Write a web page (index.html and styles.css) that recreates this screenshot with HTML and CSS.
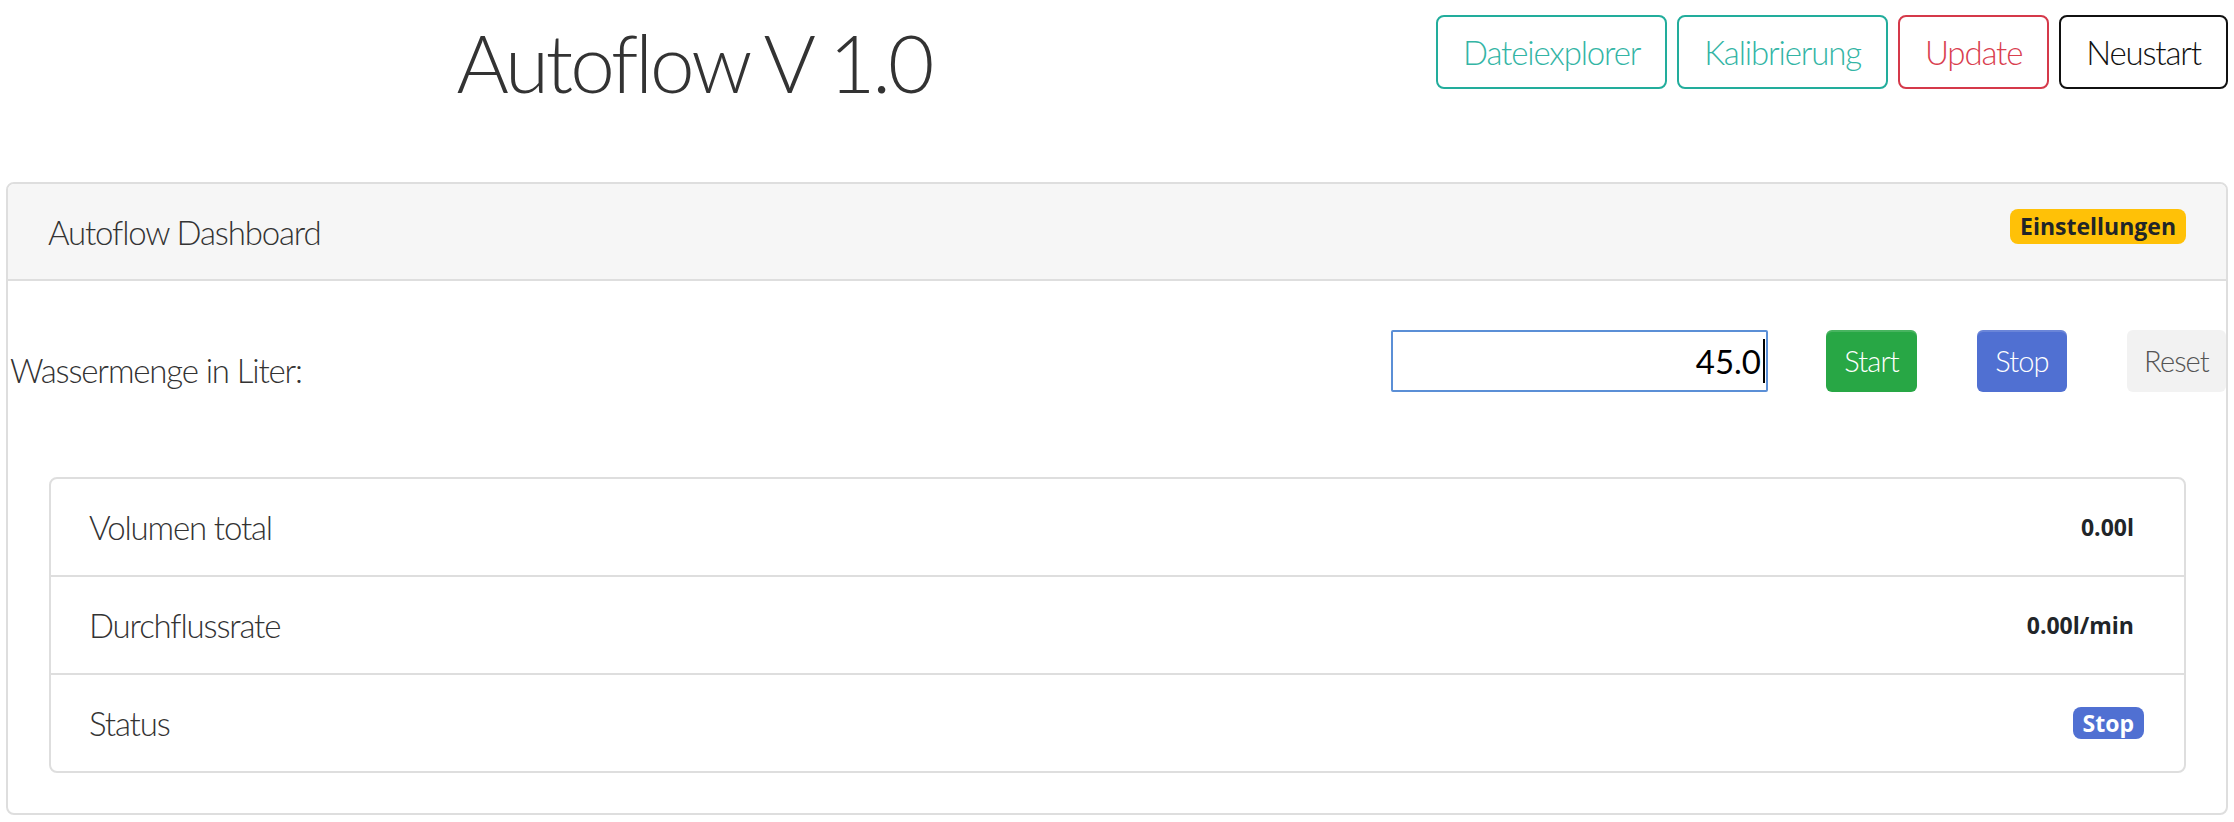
FILE: index.html
```html
<!DOCTYPE html>
<html lang="de">
<head>
<meta charset="utf-8">
<title>Autoflow V 1.0</title>
<link rel="stylesheet" href="styles.css">
</head>
<body>
<div class="page">
  <header class="topbar">
    <div class="title-col"><h1 class="title">Autoflow V 1.0</h1></div>
    <nav class="actions">
      <button class="btn btn-teal">Dateiexplorer</button>
      <button class="btn btn-teal">Kalibrierung</button>
      <button class="btn btn-red">Update</button>
      <button class="btn btn-dark">Neustart</button>
    </nav>
  </header>

  <section class="card">
    <div class="card-header">
      <span class="card-title">Autoflow Dashboard</span>
      <span class="badge badge-warning">Einstellungen</span>
    </div>
    <div class="card-body">
      <div class="control-row">
        <label class="amount-label" for="amount">Wassermenge in Liter:</label>
        <div class="input-wrap">
          <input id="amount" class="amount-input" type="text" value="45.0">
          <span class="caret"></span>
        </div>
        <button class="btn-sm btn-start">Start</button>
        <button class="btn-sm btn-stop">Stop</button>
        <button class="btn-sm btn-reset">Reset</button>
      </div>

      <ul class="list">
        <li class="list-item"><span>Volumen total</span><span class="badge badge-plain">0.00l</span></li>
        <li class="list-item"><span>Durchflussrate</span><span class="badge badge-plain">0.00l/min</span></li>
        <li class="list-item"><span>Status</span><span class="badge badge-blue">Stop</span></li>
      </ul>
    </div>
  </section>
</div>
</body>
</html>
```

FILE: styles.css
```css
* { box-sizing: border-box; }

html, body {
  margin: 0;
  padding: 0;
  background: #ffffff;
}

body {
  font-family: Lato, "Open Sans", "Liberation Sans", sans-serif;
  font-weight: 300;
  font-size: 33px;
  line-height: 48px;
  letter-spacing: -0.035em;
  color: #212529;
}

.page {
  padding: 0 6px 0 6px;
}

/* ---------- top bar ---------- */
.topbar {
  display: flex;
  align-items: flex-start;
  height: 182px;
}

.title-col {
  width: 1376px;
  text-align: center;
}

.title {
  margin: 22px 0 0;
  font-size: 80px;
  line-height: 80px;
  font-weight: 300;
  letter-spacing: -3px;
  color: #333333;
}

.actions {
  margin-left: auto;
  display: flex;
  gap: 10px;
  padding-top: 15px;
}

.btn {
  font-family: inherit;
  font-weight: 300;
  font-size: 33px;
  line-height: 48px;
  letter-spacing: -0.035em;
  height: 74px;
  padding: 0 25px;
  background: #fff;
  border: 2px solid;
  border-radius: 8px;
}

.btn-teal { color: #33b5a5; border-color: #22ad9c; }
.btn-red { color: #d9404f; border-color: #d5394a; }
.btn-dark { color: #111; border-color: #111; }

/* ---------- card ---------- */
.card {
  border: 2px solid #dedede;
  border-radius: 8px;
  overflow: hidden;
}

.card-header {
  display: flex;
  align-items: center;
  justify-content: space-between;
  padding: 24px 40px 23px;
  background: #f6f6f6;
  border-bottom: 2px solid #dedede;
}

.card-title {
  color: #333;
}

.card-header .badge {
  align-self: flex-start;
  margin-top: 1px;
}

.card-body {
  padding: 49px 0 40px;
}

.control-row {
  display: flex;
  align-items: flex-start;
  height: 62px;
  margin-right: 0;
  padding-left: 2px;
}

.amount-label {
  flex: 1;
  padding-top: 16px;
  color: #333;
}

.input-wrap {
  position: relative;
  width: 377px;
  height: 62px;
}

.amount-input {
  width: 100%;
  height: 100%;
  border: 2px solid #5b8fd6;
  border-radius: 2px;
  padding: 0 5px 0 10px;
  text-align: right;
  font-family: Lato, "Open Sans", sans-serif;
  font-weight: 400;
  font-size: 33px;
  color: #000;
  outline: none;
  background: #fff;
}

.caret {
  position: absolute;
  right: 3px;
  top: 9px;
  width: 2px;
  height: 44px;
  background: #000;
}

.btn-sm {
  font-family: inherit;
  font-weight: 300;
  font-size: 29px;
  line-height: 42px;
  letter-spacing: -0.03em;
  height: 62px;
  padding: 0;
  border: 0;
  border-radius: 6px;
  margin-left: 58px;
}

.btn-start { width: 91px; background: #28a745; color: #fff; box-shadow: inset 0 2px 0 rgba(255,255,255,.15); }
.btn-stop { width: 90px; margin-left: 60px; background: #5070d2; color: #fff; box-shadow: inset 0 2px 0 rgba(255,255,255,.15); }
.btn-reset { width: 99px; margin-left: 60px; background: #f2f2f2; color: #555; }

/* ---------- list ---------- */
.list {
  list-style: none;
  margin: 85px 40px 0 41px;
  padding: 0;
  border: 2px solid #dedede;
  border-radius: 8px;
}

.list-item {
  display: flex;
  align-items: center;
  justify-content: space-between;
  padding: 24px 40px 24px 38px;
  height: 96px;
  color: #333;
}

.list-item + .list-item {
  border-top: 2px solid #dedede;
  height: 98px;
}

/* ---------- badges ---------- */
.badge {
  display: inline-block;
  font-family: "Open Sans", Lato, sans-serif;
  font-weight: 700;
  font-size: 23px;
  line-height: 24px;
  letter-spacing: 0;
  padding: 6px 10px;
  border-radius: 8px;
  white-space: nowrap;
}

.badge-warning { background: #ffc107; color: #212529; padding: 5px 10px 6px; }
.badge-plain { color: #212529; }
.badge-blue { background: #5070d2; color: #fff; padding: 4px 10px; line-height: 24px; }
```
